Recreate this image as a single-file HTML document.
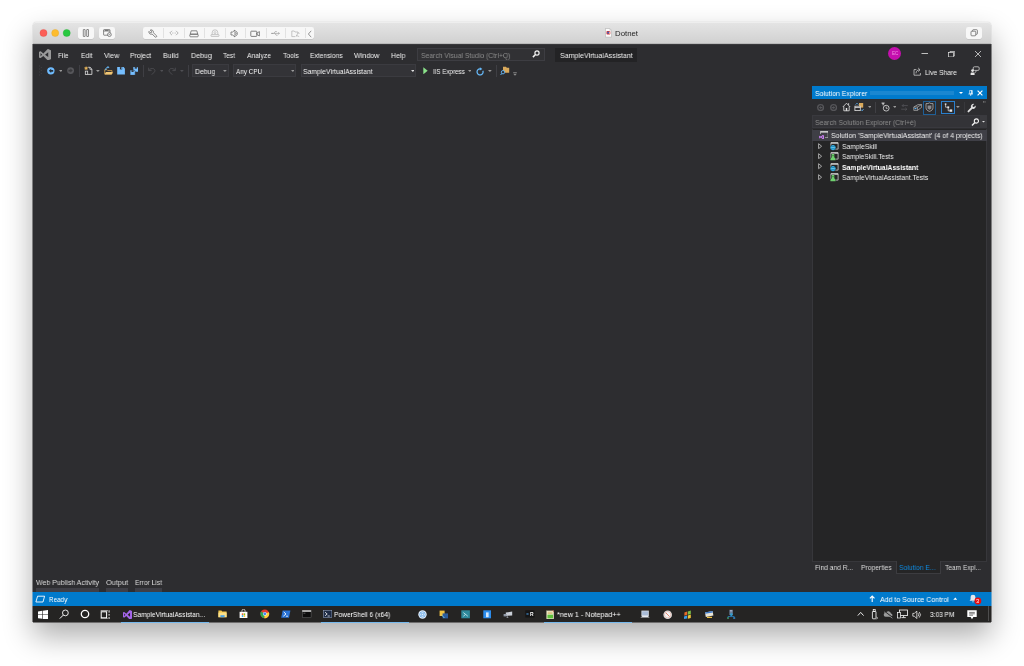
<!DOCTYPE html>
<html><head><meta charset="utf-8"><title>Dotnet</title>
<style>
html,body{margin:0;padding:0;background:#fff;}
body{width:1024px;height:666px;position:relative;overflow:hidden;font-family:"Liberation Sans", sans-serif;}
div,svg,span.t{position:absolute;box-sizing:border-box;}
span.t{white-space:pre;line-height:12px;height:12px;transform-origin:0 0;will-change:transform;}
</style></head><body>
<div style="left:33px;top:22px;width:958px;height:600px;border-radius:3.5px 3.5px 0 0;box-shadow:0 14px 30px rgba(0,0,0,0.33),0 0 1px rgba(0,0,0,0.3);background:linear-gradient(#e2e2e2 0,#e2e2e2 20px,#2d2d30 20px);"></div>
<div style="left:32px;top:25px;width:1px;height:19px;background:rgba(222,222,222,0.5);"></div>
<div style="left:32px;top:44px;width:1px;height:548px;background:rgba(45,45,48,0.5);"></div>
<div style="left:32px;top:592px;width:1px;height:14px;background:rgba(0,122,204,0.5);"></div>
<div style="left:32px;top:606px;width:1px;height:16px;background:rgba(37,36,35,0.5);"></div>
<div style="left:991px;top:25px;width:1px;height:19px;background:rgba(222,222,222,0.5);"></div>
<div style="left:991px;top:44px;width:1px;height:548px;background:rgba(45,45,48,0.5);"></div>
<div style="left:991px;top:592px;width:1px;height:14px;background:rgba(0,122,204,0.5);"></div>
<div style="left:991px;top:606px;width:1px;height:16px;background:rgba(37,36,35,0.5);"></div>
<div style="left:33px;top:22px;width:958px;height:22px;border-radius:3.5px 3.5px 0 0;background:linear-gradient(#e4e4e4,#d1d1d1);border-top:1px solid #eeeeee;border-bottom:1px solid #b9b9b9;"></div>
<svg style="left:36px;top:26px;" width="40" height="14" viewBox="0 0 40 14" preserveAspectRatio="none"><circle cx="7.5" cy="7" r="3.550" fill="#fc5f57" stroke="#e0443e" stroke-width="0.350"/><circle cx="19.200000000000003" cy="7" r="3.550" fill="#fdbc2e" stroke="#dea123" stroke-width="0.350"/><circle cx="30.700000000000003" cy="7" r="3.550" fill="#28c840" stroke="#1aab29" stroke-width="0.350"/></svg>
<div style="left:77.75px;top:27px;width:16.25px;height:11.7px;background:#f7f7f7;border-radius:2px;box-shadow:0 0.4px 0.5px rgba(0,0,0,0.14);"></div>
<div style="left:98.75px;top:27px;width:16.25px;height:11.7px;background:#f7f7f7;border-radius:2px;box-shadow:0 0.4px 0.5px rgba(0,0,0,0.14);"></div>
<div style="left:142.7px;top:27px;width:171.3px;height:11.7px;background:#f7f7f7;border-radius:2px;box-shadow:0 0.4px 0.5px rgba(0,0,0,0.14);"></div>
<div style="left:163.2px;top:27.5px;width:0.6px;height:10.7px;background:#e2e2e2;"></div>
<div style="left:183.7px;top:27.5px;width:0.6px;height:10.7px;background:#e2e2e2;"></div>
<div style="left:204.4px;top:27.5px;width:0.6px;height:10.7px;background:#e2e2e2;"></div>
<div style="left:224.7px;top:27.5px;width:0.6px;height:10.7px;background:#e2e2e2;"></div>
<div style="left:245.4px;top:27.5px;width:0.6px;height:10.7px;background:#e2e2e2;"></div>
<div style="left:265.5px;top:27.5px;width:0.6px;height:10.7px;background:#e2e2e2;"></div>
<div style="left:285.4px;top:27.5px;width:0.6px;height:10.7px;background:#e2e2e2;"></div>
<div style="left:305.3px;top:27.5px;width:0.6px;height:10.7px;background:#e2e2e2;"></div>
<div style="left:966px;top:27px;width:16px;height:11.7px;background:#f7f7f7;border-radius:2px;box-shadow:0 0.4px 0.5px rgba(0,0,0,0.14);"></div>
<svg style="left:82px;top:28.8px;" width="8" height="8" viewBox="0 0 8 8" preserveAspectRatio="none"><rect x="1.300" y="0.500" width="1.800" height="7" rx="0.300" fill="none" stroke="#5a5a5a" stroke-width="0.700"/><rect x="4.700" y="0.500" width="1.800" height="7" rx="0.300" fill="none" stroke="#5a5a5a" stroke-width="0.700"/></svg>
<svg style="left:102.7px;top:28.7px;" width="9.2" height="9" viewBox="0 0 9.2 9" preserveAspectRatio="none"><rect x="0.6" y="0.6" width="6.4" height="5.6" rx="0.5" fill="none" stroke="#5a5a5a" stroke-width="0.7"/><line x1="0.6" y1="2" x2="7" y2="2" stroke="#5a5a5a" stroke-width="0.7"/><rect x="2" y="0.9" width="3.4" height="0.8" fill="#5a5a5a"/><circle cx="6.4" cy="5.6" r="1.9" fill="#f7f7f7" stroke="#5a5a5a" stroke-width="0.7"/><path d="M5.6 5.6h1.6" stroke="#5a5a5a" stroke-width="0.6"/></svg>
<svg style="left:148px;top:28.5px;" width="10" height="9" viewBox="0 0 10 9" preserveAspectRatio="none"><path d="M2.2 1.2a2.2 2.2 0 0 1 3.2 2.5l3 3a0.9 0.9 0 0 1-1.3 1.3l-3-3A2.2 2.2 0 0 1 1 2.4l1.3 1.3 1.2-0.3 0.3-1.2z" fill="none" stroke="#5a5a5a" stroke-width="0.7" stroke-linejoin="round"/></svg>
<svg style="left:168.5px;top:30px;" width="10" height="6" viewBox="0 0 10 6" preserveAspectRatio="none"><path d="M3 0.8L0.8 3L3 5.2M7 0.8L9.2 3L7 5.2" fill="none" stroke="#9a9a9a" stroke-width="0.7"/><circle cx="3.6" cy="3" r="0.45" fill="#9a9a9a"/><circle cx="5" cy="3" r="0.45" fill="#9a9a9a"/><circle cx="6.4" cy="3" r="0.45" fill="#9a9a9a"/></svg>
<svg style="left:189px;top:29.5px;" width="10" height="8" viewBox="0 0 10 8" preserveAspectRatio="none"><path d="M2.2 0.8h5.6l1 3.4H1.2z" fill="none" stroke="#5a5a5a" stroke-width="0.7" stroke-linejoin="round"/><rect x="0.8" y="4.2" width="8.4" height="2.6" rx="0.8" fill="none" stroke="#5a5a5a" stroke-width="0.7"/></svg>
<svg style="left:209.5px;top:29px;" width="10" height="9" viewBox="0 0 10 9" preserveAspectRatio="none"><path d="M2.2 5.4V3.6a2.8 2.8 0 0 1 5.6 0v1.8" fill="none" stroke="#b0b0b0" stroke-width="0.7"/><circle cx="5" cy="3.6" r="1" fill="none" stroke="#b0b0b0" stroke-width="0.6"/><rect x="1" y="5.6" width="8" height="1.8" rx="0.4" fill="none" stroke="#b0b0b0" stroke-width="0.7"/></svg>
<svg style="left:230px;top:29px;" width="10" height="9" viewBox="0 0 10 9" preserveAspectRatio="none"><path d="M1 3h1.6L5 1v7L2.6 6H1z" fill="none" stroke="#5a5a5a" stroke-width="0.7" stroke-linejoin="round"/><path d="M6.3 2.2a3 3 0 0 1 0 4.6" fill="none" stroke="#5a5a5a" stroke-width="0.7"/><path d="M5.8 3.4a1.5 1.5 0 0 1 0 2.2" fill="none" stroke="#5a5a5a" stroke-width="0.6"/></svg>
<svg style="left:250.3px;top:29.5px;" width="11" height="8" viewBox="0 0 11 8" preserveAspectRatio="none"><rect x="0.8" y="1.2" width="6" height="5.2" rx="0.6" fill="none" stroke="#5a5a5a" stroke-width="0.75"/><path d="M6.8 3.2l2.6-1.6v4.4L6.8 4.4z" fill="none" stroke="#5a5a5a" stroke-width="0.7" stroke-linejoin="round"/></svg>
<svg style="left:270.5px;top:30px;" width="10" height="7" viewBox="0 0 10 7" preserveAspectRatio="none"><path d="M0.8 3.4h7.6M8.4 3.4l-1.2-1M8.4 3.4l-1.2 1M2.6 3.4l1.6-1.8h1.6M3.8 3.4l1.4 1.8h1.4" fill="none" stroke="#8f8f8f" stroke-width="0.6"/><circle cx="1" cy="3.4" r="0.7" fill="#8f8f8f"/></svg>
<svg style="left:290.5px;top:29.5px;" width="10" height="8" viewBox="0 0 10 8" preserveAspectRatio="none"><path d="M0.8 6.6V1h2.4l0.8 1h3v1.4" fill="none" stroke="#b0b0b0" stroke-width="0.7"/><path d="M0.8 6.6h3.4M5 6.8l2-4 1.6 0.6M5.2 5.4l3 1.2" fill="none" stroke="#b0b0b0" stroke-width="0.7"/></svg>
<svg style="left:306.5px;top:29.5px;" width="6" height="8" viewBox="0 0 6 8" preserveAspectRatio="none"><path d="M4.2 0.8L1.4 4l2.8 3.2" fill="none" stroke="#7a7a7a" stroke-width="0.8"/></svg>
<svg style="left:969.5px;top:29px;" width="9" height="8" viewBox="0 0 9 8" preserveAspectRatio="none"><rect x="2.6" y="0.7" width="4.8" height="4.6" rx="0.8" fill="none" stroke="#5a5a5a" stroke-width="0.7"/><rect x="1" y="2.2" width="4.8" height="4.6" rx="0.8" fill="#f7f7f7" stroke="#5a5a5a" stroke-width="0.7"/></svg>
<svg style="left:605px;top:28.1px;" width="7" height="9.6" viewBox="0 0 7 9.6" preserveAspectRatio="none"><path d="M0.400 0.400h4.200l2 2v6.800h-6.200z" fill="#fbfbfb" stroke="#a6a6a6" stroke-width="0.550"/><path d="M4.600 0.400v2h2z" fill="#c9c9c9"/><rect x="1.500" y="3" width="3.800" height="3.400" rx="0.700" fill="#d8342f"/><rect x="2.300" y="3.700" width="1.600" height="1.900" fill="#3467cf"/><rect x="4.200" y="3.500" width="0.600" height="2.400" fill="#f4f4f4"/></svg>
<div style="left:33px;top:44px;width:958px;height:1px;background:#39393c;"></div>
<svg style="left:39px;top:48.8px;" width="12.3" height="11.4" viewBox="0 0 24 24" preserveAspectRatio="none"><path d="M17.6 0.1L23.1 2.6Q24 3 24 3.9V20.1Q24 21 23.1 21.4L17.6 23.9Q16.9 24 16.5 23.5L8.5 14.7 3.9 18.5Q3 19.2 2.4 19L0.6 18.2Q0 18 0 17.3V6.700Q0 6 0.6 5.800L2.400 5Q3 4.800 3.900 5.500L8.500 9.300 16.500 0.500Q16.900 0 17.600 0.100ZM18 6.900V17.100L11.800 12ZM3 8.600L6.100 12 3 15.400Z" fill="#9a9a9a" fill-rule="evenodd"/></svg>
<div style="left:417.2px;top:48.2px;width:127.8px;height:12.4px;background:#313134;border:1px solid #3d3d42;"></div>
<svg style="left:532.4px;top:50.2px;" width="8" height="8" viewBox="0 0 8 8" preserveAspectRatio="none"><circle cx="5" cy="3" r="2.100" fill="none" stroke="#f1f1f1" stroke-width="1.200"/><path d="M3.500 4.500L0.900 7.100" stroke="#f1f1f1" stroke-width="1.500"/></svg>
<div style="left:555.3px;top:47.6px;width:81.8px;height:14.2px;background:#232325;"></div>
<div style="left:888px;top:47px;width:13px;height:13px;border-radius:50%;background:#c40fae;"></div>
<svg style="left:920px;top:52px;" width="10" height="3" viewBox="0 0 10 3" preserveAspectRatio="none"><path d="M1.5 1.5h6.5" stroke="#e4e4e4" stroke-width="0.8"/></svg>
<svg style="left:947.8px;top:50.6px;" width="7.2" height="6.6" viewBox="0 0 7.2 6.6" preserveAspectRatio="none"><path d="M2 1.500V0.500h4.700v4.300H5.500" fill="none" stroke="#e4e4e4" stroke-width="0.700"/><rect x="0.500" y="1.600" width="4.900" height="4.400" fill="none" stroke="#e4e4e4" stroke-width="0.700"/></svg>
<svg style="left:974px;top:50px;" width="8" height="8" viewBox="0 0 8 8" preserveAspectRatio="none"><path d="M1 1l6 6M7 1L1 7" stroke="#e4e4e4" stroke-width="0.75"/></svg>
<svg style="left:39.2px;top:65.4px;" width="3.6" height="11" viewBox="0 0 3.6 11" preserveAspectRatio="none"><g fill="#3e3e42"><rect x="0" y="0.5" width="1" height="1"/><rect x="1.800" y="2" width="1" height="1"/><rect x="0" y="3.500" width="1" height="1"/><rect x="1.800" y="5" width="1" height="1"/><rect x="0" y="6.500" width="1" height="1"/><rect x="1.800" y="8" width="1" height="1"/><rect x="0" y="9.500" width="1" height="1"/></g></svg>
<svg style="left:46.9px;top:66.85000000000001px;" width="7.7" height="7.7" viewBox="0 0 7.7 7.7" preserveAspectRatio="none"><circle cx="3.850" cy="3.850" r="3.700" fill="#6fbcff"/><path d="M4.200 1.700L1.800 3.850l2.400 2.150V4.700h2V3h-2z" fill="#26303a"/></svg>
<svg style="left:58.7px;top:69.95px;" width="3.8" height="2.3" viewBox="0 0 3.8 2.3" preserveAspectRatio="none"><path d="M0 0h3.8L1.9 1.9z" fill="#9a9a9a"/></svg>
<svg style="left:67px;top:67.10000000000001px;" width="7.2" height="7.2" viewBox="0 0 7.2 7.2" preserveAspectRatio="none"><circle cx="3.600" cy="3.600" r="3.450" fill="#56565a"/><path d="M3.400 1.600L5.700 3.600 3.400 5.600V4.400H1.500V2.800h1.900z" fill="#38383b"/></svg>
<div style="left:79px;top:65.2px;width:0.7px;height:11.4px;background:#3f3f44;"></div>
<svg style="left:84.2px;top:66.2px;" width="8.4" height="9" viewBox="0 0 8.4 9" preserveAspectRatio="none"><path d="M3.700 1.300h2.400l1.800 1.800v5.300H3.700" fill="none" stroke="#e6e6e6" stroke-width="0.800"/><path d="M5.900 1.300v2h2" fill="none" stroke="#e6e6e6" stroke-width="0.700"/><rect x="1.300" y="5.100" width="2.400" height="3.300" fill="#2d2d30" stroke="#e6e6e6" stroke-width="0.750"/><path d="M2.10 -0.10L2.83 1.29L4.38 1.56L3.29 2.69L3.51 4.24L2.10 3.55L0.69 4.24L0.91 2.69L-0.18 1.56L1.37 1.29z" fill="#ecb95c" stroke="#2d2d30" stroke-width="0.300"/></svg>
<svg style="left:96.39999999999999px;top:69.85px;" width="3.8" height="2.3" viewBox="0 0 3.8 2.3" preserveAspectRatio="none"><path d="M0 0h3.8L1.9 1.9z" fill="#9a9a9a"/></svg>
<svg style="left:103.8px;top:66.4px;" width="9" height="8.8" viewBox="0 0 9 8.8" preserveAspectRatio="none"><path d="M0.700 8V3.700h2.300l0.800 0.900h4.200v3.400z" fill="#2d2d30" stroke="#d9a652" stroke-width="0.800"/><path d="M0.600 8.400l1.300-2.300h6.900l-1.300 2.300z" fill="#f0c674"/><path d="M1.600 4.200C1.600 2.200 2.600 1.200 4 1.200" fill="none" stroke="#66b8f7" stroke-width="1"/><path d="M3.600 0v2.600l1.900-1.300z" fill="#66b8f7"/></svg>
<svg style="left:117.1px;top:67.1px;" width="8" height="7.5" viewBox="0 0 8 7.5" preserveAspectRatio="none"><path d="M0.200 0.100h6.400l1.300 1.300v6H0.200z" fill="#75beff"/><rect x="2.900" y="0.100" width="2.300" height="2.300" fill="#2d2d30"/><rect x="4.300" y="0.300" width="0.700" height="1.600" fill="#75beff"/></svg>
<svg style="left:129.7px;top:66.5px;" width="8.6" height="8.4" viewBox="0 0 8.6 8.4" preserveAspectRatio="none"><path d="M3.300 0.100h4.200l1 1v3.600H3.300z" fill="#75beff"/><rect x="4.700" y="0.100" width="2.200" height="1.500" fill="#2d2d30"/><path d="M0.100 3.100h4.100l1 1v4.200H0.100z" fill="#75beff" stroke="#2d2d30" stroke-width="0.500"/><rect x="1.500" y="3.300" width="2.100" height="1.600" fill="#2d2d30"/></svg>
<div style="left:142.8px;top:65.2px;width:0.7px;height:11.4px;background:#3f3f44;"></div>
<svg style="left:147.6px;top:66.8px;" width="8" height="7.8" viewBox="0 0 8 7.8" preserveAspectRatio="none"><path d="M0.700 0.700v2.900h2.900" fill="none" stroke="#4f4f54" stroke-width="0.900"/><path d="M0.900 3.400C2.400 1.200 5.400 0.800 6.600 2.600 7.600 4.200 6 6 3.600 7.400" fill="none" stroke="#4f4f54" stroke-width="0.900"/></svg>
<svg style="left:159.6px;top:69.95px;" width="3.8" height="2.3" viewBox="0 0 3.8 2.3" preserveAspectRatio="none"><path d="M0 0h3.8L1.9 1.9z" fill="#4f4f54"/></svg>
<svg style="left:168.2px;top:66.8px;" width="8" height="7.8" viewBox="0 0 8 7.8" preserveAspectRatio="none"><path d="M7.300 0.700v2.900H4.400" fill="none" stroke="#4f4f54" stroke-width="0.900"/><path d="M7.100 3.400C5.600 1.200 2.600 0.800 1.400 2.600 0.400 4.200 2 6 4.400 7.400" fill="none" stroke="#4f4f54" stroke-width="0.900"/></svg>
<svg style="left:180.1px;top:69.95px;" width="3.8" height="2.3" viewBox="0 0 3.8 2.3" preserveAspectRatio="none"><path d="M0 0h3.8L1.9 1.9z" fill="#4f4f54"/></svg>
<div style="left:188.2px;top:65.2px;width:0.7px;height:11.4px;background:#3f3f44;"></div>
<div style="left:192.2px;top:64.4px;width:37.2px;height:12.8px;background:#333337;border:1px solid #3b3b40;"></div>
<svg style="left:222.9px;top:70.05px;" width="3.8" height="2.3" viewBox="0 0 3.8 2.3" preserveAspectRatio="none"><path d="M0 0h3.8L1.9 1.9z" fill="#9a9a9a"/></svg>
<div style="left:233.3px;top:64.4px;width:63px;height:12.8px;background:#333337;border:1px solid #3b3b40;"></div>
<svg style="left:290.5px;top:70.05px;" width="3.8" height="2.3" viewBox="0 0 3.8 2.3" preserveAspectRatio="none"><path d="M0 0h3.8L1.9 1.9z" fill="#9a9a9a"/></svg>
<div style="left:300.5px;top:64.4px;width:115.8px;height:12.8px;background:#333337;border:1px solid #3b3b40;"></div>
<svg style="left:410.5px;top:70.05px;" width="3.8" height="2.3" viewBox="0 0 3.8 2.3" preserveAspectRatio="none"><path d="M0 0h3.8L1.9 1.9z" fill="#e0e0e0"/></svg>
<svg style="left:422.8px;top:66.9px;" width="5" height="7.6" viewBox="0 0 5 7.6" preserveAspectRatio="none"><path d="M0.300 0.300L4.700 3.800 0.300 7.300z" fill="#8ae28a"/></svg>
<svg style="left:467.70000000000005px;top:70.05px;" width="3.8" height="2.3" viewBox="0 0 3.8 2.3" preserveAspectRatio="none"><path d="M0 0h3.8L1.9 1.9z" fill="#9a9a9a"/></svg>
<svg style="left:476.2px;top:66.6px;" width="8" height="9" viewBox="0 0 8 9" preserveAspectRatio="none"><path d="M6.820 3.700A3 3 0 1 1 4 1.900" fill="none" stroke="#66b8f7" stroke-width="1.250"/><path d="M3.800 0.200v3.400L6.400 1.900z" fill="#66b8f7"/></svg>
<svg style="left:487.90000000000003px;top:70.05px;" width="3.8" height="2.3" viewBox="0 0 3.8 2.3" preserveAspectRatio="none"><path d="M0 0h3.8L1.9 1.9z" fill="#9a9a9a"/></svg>
<div style="left:496.4px;top:65.2px;width:0.7px;height:11.4px;background:#3f3f44;"></div>
<svg style="left:500px;top:66.0px;" width="10" height="10" viewBox="0 0 10 10" preserveAspectRatio="none"><path d="M3 0.800h3l0.800 0.900h2.400v5H3z" fill="#d9a95b"/><circle cx="3" cy="6.200" r="1.700" fill="#2d2d30" stroke="#66b8f7" stroke-width="0.900"/><path d="M1.800 7.400L0.600 9" stroke="#66b8f7" stroke-width="1"/></svg>
<svg style="left:513px;top:72px;" width="4" height="4.2" viewBox="0 0 4 4.2" preserveAspectRatio="none"><path d="M0.200 0.600h3.600" stroke="#8c8c8c" stroke-width="0.800"/><path d="M0.200 1.800h3.600L2 3.800z" fill="#8c8c8c"/></svg>
<svg style="left:913px;top:67.2px;" width="9" height="9" viewBox="0 0 9 9" preserveAspectRatio="none"><path d="M3.4 2.6H1v5.6h6.4V6" fill="none" stroke="#cfcfcf" stroke-width="0.75"/><path d="M3 6.4C3 4 4.6 2.8 6.6 2.8M5.2 1l1.8 1.8L5.2 4.6" fill="none" stroke="#cfcfcf" stroke-width="0.75"/></svg>
<svg style="left:969.6px;top:66.4px;" width="10" height="10" viewBox="0 0 10 10" preserveAspectRatio="none"><rect x="3.2" y="0.8" width="6" height="3.6" rx="1.2" fill="none" stroke="#cfcfcf" stroke-width="0.8"/><circle cx="2.6" cy="4.6" r="1.4" fill="#e6e6e6"/><path d="M0.6 9V7.4a1 1 0 0 1 1-1h2a1 1 0 0 1 1 1V9z" fill="#e6e6e6"/><path d="M6 4.4v1.6l-1.4 0.6" fill="none" stroke="#cfcfcf" stroke-width="0.7"/></svg>
<div style="left:812px;top:86.4px;width:175.39999999999998px;height:12.8px;background:#007acc;"></div>
<div style="left:870px;top:90.6px;width:84px;height:4.2px;background:rgba(255,255,255,0.10);"></div>
<svg style="left:958.6px;top:91.8px;" width="4" height="2.4" viewBox="0 0 4 2.4" preserveAspectRatio="none"><path d="M0 0h4L2 2z" fill="#ffffff"/></svg>
<svg style="left:967.8px;top:89.6px;" width="5.6" height="6.8" viewBox="0 0 5.6 6.8" preserveAspectRatio="none"><path d="M1.700 0.400h2.500v3.500H1.700zM0.400 4h4.800M2.700 4v2.700" fill="none" stroke="#fff" stroke-width="0.650"/><rect x="3.300" y="0.400" width="0.900" height="3.500" fill="#fff"/></svg>
<svg style="left:977.4px;top:89.7px;" width="6" height="6" viewBox="0 0 6 6" preserveAspectRatio="none"><path d="M0.600 0.600l4.800 4.800M5.400 0.600L0.600 5.400" stroke="#fff" stroke-width="1.150"/></svg>
<svg style="left:817px;top:103.8px;" width="7.2" height="7.2" viewBox="0 0 7.2 7.2" preserveAspectRatio="none"><circle cx="3.600" cy="3.600" r="2.900" fill="none" stroke="#56565a" stroke-width="1.350"/><path d="M3.900 1.900L2 3.600l1.900 1.700V4.200h1.600V3H3.900z" fill="#56565a"/></svg>
<svg style="left:829.8px;top:103.8px;" width="7.2" height="7.2" viewBox="0 0 7.2 7.2" preserveAspectRatio="none"><circle cx="3.600" cy="3.600" r="2.900" fill="none" stroke="#56565a" stroke-width="1.350"/><path d="M3.300 1.900L5.200 3.600 3.300 5.300V4.200H1.700V3h1.600z" fill="#56565a"/></svg>
<svg style="left:841.6px;top:102.4px;" width="9" height="9.6" viewBox="0 0 9 9.6" preserveAspectRatio="none"><path d="M0.8 5L4.5 1.2 8.2 5M6.6 3V1.2" fill="none" stroke="#e6e6e6" stroke-width="0.8"/><path d="M1.8 4.4v4.4h5.4V4.4" fill="none" stroke="#e6e6e6" stroke-width="0.8"/><rect x="3.8" y="6" width="1.4" height="2.8" fill="#e6e6e6"/></svg>
<svg style="left:854.4px;top:102.4px;" width="10.4" height="10" viewBox="0 0 10.4 10" preserveAspectRatio="none"><rect x="5" y="1" width="4.2" height="4.6" fill="#d9a95b"/><rect x="0.9" y="4.2" width="5.4" height="4.4" fill="#2d2d30" stroke="#e0e0e0" stroke-width="0.8"/><path d="M0.9 5.4h5.4" stroke="#e0e0e0" stroke-width="0.9"/><path d="M1.6 2.6l1.4-1.4 1.4 1.4" fill="none" stroke="#5db3f5" stroke-width="0.8"/><path d="M7 7.6l1.2 1.2 1.4-1.8" fill="none" stroke="#5db3f5" stroke-width="0.8"/></svg>
<svg style="left:867.7px;top:106.05px;" width="3.8" height="2.3" viewBox="0 0 3.8 2.3" preserveAspectRatio="none"><path d="M0 0h3.8L1.9 1.9z" fill="#9a9a9a"/></svg>
<div style="left:875px;top:101.6px;width:0.7px;height:11.4px;background:#3f3f44;"></div>
<svg style="left:880.6px;top:101.8px;" width="10" height="10.4" viewBox="0 0 10 10.4" preserveAspectRatio="none"><circle cx="5.2" cy="6.2" r="2.9" fill="none" stroke="#e0e0e0" stroke-width="0.8"/><path d="M5.2 4.6v1.8h1.4" fill="none" stroke="#e0e0e0" stroke-width="0.7"/><path d="M0.600 1.100h3M2.100 1.100v2.200" stroke="#f0f0f0" stroke-width="0.900"/></svg>
<svg style="left:892.5px;top:106.05px;" width="3.8" height="2.3" viewBox="0 0 3.8 2.3" preserveAspectRatio="none"><path d="M0 0h3.8L1.9 1.9z" fill="#9a9a9a"/></svg>
<svg style="left:900px;top:103px;" width="9" height="9" viewBox="0 0 9 9" preserveAspectRatio="none"><path d="M2.2 2.6h5.6M2.2 2.6l1.4-1.4M2.2 2.6l1.4 1.4M6.8 6.2H1.2M6.8 6.2L5.4 4.8M6.8 6.2L5.4 7.6" fill="none" stroke="#55555a" stroke-width="0.8"/></svg>
<svg style="left:912.6px;top:103px;" width="9.6" height="9" viewBox="0 0 9.6 9" preserveAspectRatio="none"><path d="M0.8 4L5 1.6h3.600v2.800L4.400 7.400H0.800z" fill="none" stroke="#b4b4b4" stroke-width="0.700"/><path d="M0.800 4h3.600v3.400M4.400 4L8.600 1.600" fill="none" stroke="#b4b4b4" stroke-width="0.700"/><rect x="1.6" y="5" width="1.8" height="1.2" fill="#5db3f5"/></svg>
<div style="left:923.2px;top:100.5px;width:13px;height:14px;border:1px solid #1f5f96;background:#2a2a2d;"></div>
<svg style="left:925.4px;top:102.4px;" width="9" height="10" viewBox="0 0 9 10" preserveAspectRatio="none"><path d="M1 1.6h2l1.4-0.8L6 1.6h2v4.2C8 7.6 6.4 8.8 4.5 9.4 2.6 8.8 1 7.6 1 5.800z" fill="none" stroke="#b4b4b4" stroke-width="0.800"/><path d="M2.600 3.400h3.800v3L4.500 7.800 2.600 6.400z" fill="#8a8a8e"/></svg>
<div style="left:941px;top:101px;width:13.5px;height:13px;border:1px solid #2a7fcc;background:#2a2a2d;"></div>
<svg style="left:943.6px;top:102.6px;" width="9" height="9.6" viewBox="0 0 9 9.6" preserveAspectRatio="none"><path d="M1.6 1v3.2h2.6v3.6h1.6" fill="none" stroke="#e6e6e6" stroke-width="0.7"/><rect x="0.8" y="0.4" width="1.6" height="1.4" fill="#e6e6e6"/><rect x="3.4" y="3.4" width="1.8" height="1.8" fill="#e6e6e6"/><rect x="5.6" y="6.4" width="2.6" height="2.4" fill="#e6e6e6"/></svg>
<svg style="left:955.8000000000001px;top:106.14999999999999px;" width="3.8" height="2.3" viewBox="0 0 3.8 2.3" preserveAspectRatio="none"><path d="M0 0h3.8L1.9 1.9z" fill="#9a9a9a"/></svg>
<div style="left:963.8px;top:101.6px;width:0.7px;height:11.4px;background:#38383c;"></div>
<svg style="left:967.4px;top:102.6px;" width="10" height="10" viewBox="0 0 10 10" preserveAspectRatio="none"><path d="M8.6 2.4L7 4 5.800 3.800 5.600 2.600 7.200 1A2.600 2.600 0 0 0 4 4.400L0.800 7.800a0.900 0.900 0 0 0 1.300 1.300L5.400 5.800A2.600 2.600 0 0 0 8.600 2.400z" fill="#e0e0e0"/></svg>
<svg style="left:982.6px;top:101.4px;" width="3" height="3" viewBox="0 0 3 3" preserveAspectRatio="none"><rect x="0" y="0.2" width="0.8" height="1.4" fill="#8c8c8c"/><rect x="1.6" y="0.2" width="0.8" height="1.4" fill="#8c8c8c"/></svg>
<div style="left:812px;top:115.2px;width:175.39999999999998px;height:13px;background:#333337;border:1px solid #39393e;"></div>
<div style="left:980.4px;top:116.2px;width:6.4px;height:11.2px;background:#3a3a3e;"></div>
<svg style="left:970.6px;top:117.6px;" width="8.4" height="8.4" viewBox="0 0 8.4 8.4" preserveAspectRatio="none"><circle cx="5.400" cy="3" r="2.100" fill="none" stroke="#f1f1f1" stroke-width="1.100"/><path d="M3.900 4.500L1 7.400" stroke="#f1f1f1" stroke-width="1.400"/></svg>
<svg style="left:982.2px;top:121.05px;" width="3.0" height="1.9" viewBox="0 0 3.0 1.9" preserveAspectRatio="none"><path d="M0 0h3.0L1.5 1.5z" fill="#e0e0e0"/></svg>
<div style="left:812px;top:128.6px;width:175.39999999999998px;height:433.2px;background:#252526;border:1px solid #37373b;border-top:none;"></div>
<div style="left:812px;top:130.1px;width:175.39999999999998px;height:10.6px;background:#3f3f46;"></div>
<svg style="left:819.8px;top:131.2px;" width="8.6" height="7.2" viewBox="0 0 8.6 7.2" preserveAspectRatio="none"><path d="M0.400 0.600h7.800v6.200H0.400z" fill="none" stroke="#d4d4d4" stroke-width="0.750"/><path d="M0.400 0.900h7.800" stroke="#d4d4d4" stroke-width="1.400"/></svg>
<div style="left:818.6px;top:134.4px;width:6.4px;height:5px;background:#3f3f46;"></div>
<svg style="left:819px;top:134.8px;" width="5.4" height="4.2" viewBox="0 0 24 24" preserveAspectRatio="none"><path d="M17.600 0.100L23.100 2.600Q24 3 24 3.900V20.100Q24 21 23.100 21.400L17.600 23.900Q16.900 24 16.500 23.500L8.500 14.700 3.900 18.500Q3 19.200 2.400 19L0.600 18.200Q0 18 0 17.300V6.700Q0 6 0.600 5.800L2.400 5Q3 4.800 3.900 5.500L8.500 9.300 16.500 0.500Q16.900 0 17.600 0.100ZM18 6.900V17.100L11.800 12ZM3 8.600L6.100 12 3 15.400Z" fill="#cc80f5" fill-rule="evenodd"/></svg>
<svg style="left:817.6px;top:142.5px;" width="4.6" height="6.4" viewBox="0 0 4.6 6.4" preserveAspectRatio="none"><path d="M0.600 0.700L3.600 3.200 0.600 5.700z" fill="none" stroke="#d0d0d0" stroke-width="0.750"/></svg>
<svg style="left:829.6px;top:141.9px;" width="9" height="9" viewBox="0 0 9 9" preserveAspectRatio="none"><path d="M0.900 0.800h7.200v6.300H0.900z" fill="none" stroke="#d4d4d4" stroke-width="0.750"/><path d="M0.900 1h7.200" stroke="#d4d4d4" stroke-width="1.300"/><circle cx="3" cy="5.600" r="2.900" fill="#252526"/><circle cx="3" cy="5.600" r="2.600" fill="#25a4dc"/><path d="M3 3.200v4.800M0.600 5.600h4.800" fill="none" stroke="#8fdcf8" stroke-width="0.450"/><path d="M1.300 4.100a3 3 0 0 0 3.400 0M1.300 7.100a3 3 0 0 1 3.400 0" fill="none" stroke="#12648c" stroke-width="0.500"/></svg>
<svg style="left:817.6px;top:152.7px;" width="4.6" height="6.4" viewBox="0 0 4.6 6.4" preserveAspectRatio="none"><path d="M0.600 0.700L3.600 3.200 0.600 5.700z" fill="none" stroke="#d0d0d0" stroke-width="0.750"/></svg>
<svg style="left:829.6px;top:152.1px;" width="9" height="9" viewBox="0 0 9 9" preserveAspectRatio="none"><path d="M0.900 0.800h7.200v6.300H0.900z" fill="none" stroke="#d4d4d4" stroke-width="0.750"/><path d="M0.900 1h7.200" stroke="#d4d4d4" stroke-width="1.300"/><path d="M1.300 1.700h3.400v3.300l1.300 1.600v2.100H0V6.600l1.300-1.600z" fill="#252526"/><path d="M1.700 2.100h2.600v3.100l1.300 1.600v1.500H0.400V6.800l1.300-1.600z" fill="#6fd06f"/><path d="M2.300 2.900l1.400 1.400M3.700 2.900L2.300 4.300" stroke="#256a25" stroke-width="0.550"/></svg>
<svg style="left:817.6px;top:163.29999999999998px;" width="4.6" height="6.4" viewBox="0 0 4.6 6.4" preserveAspectRatio="none"><path d="M0.600 0.700L3.600 3.200 0.600 5.700z" fill="none" stroke="#d0d0d0" stroke-width="0.750"/></svg>
<svg style="left:829.6px;top:162.7px;" width="9" height="9" viewBox="0 0 9 9" preserveAspectRatio="none"><path d="M0.900 0.800h7.200v6.300H0.900z" fill="none" stroke="#d4d4d4" stroke-width="0.750"/><path d="M0.900 1h7.200" stroke="#d4d4d4" stroke-width="1.300"/><circle cx="3" cy="5.600" r="2.900" fill="#252526"/><circle cx="3" cy="5.600" r="2.600" fill="#25a4dc"/><path d="M3 3.200v4.800M0.600 5.600h4.800" fill="none" stroke="#8fdcf8" stroke-width="0.450"/><path d="M1.300 4.100a3 3 0 0 0 3.400 0M1.300 7.100a3 3 0 0 1 3.400 0" fill="none" stroke="#12648c" stroke-width="0.500"/></svg>
<svg style="left:817.6px;top:173.5px;" width="4.6" height="6.4" viewBox="0 0 4.6 6.4" preserveAspectRatio="none"><path d="M0.600 0.700L3.600 3.200 0.600 5.700z" fill="none" stroke="#d0d0d0" stroke-width="0.750"/></svg>
<svg style="left:829.6px;top:172.9px;" width="9" height="9" viewBox="0 0 9 9" preserveAspectRatio="none"><path d="M0.900 0.800h7.200v6.300H0.900z" fill="none" stroke="#d4d4d4" stroke-width="0.750"/><path d="M0.900 1h7.200" stroke="#d4d4d4" stroke-width="1.300"/><path d="M1.300 1.700h3.400v3.300l1.300 1.600v2.100H0V6.600l1.300-1.600z" fill="#252526"/><path d="M1.700 2.100h2.600v3.100l1.300 1.600v1.500H0.400V6.800l1.300-1.600z" fill="#6fd06f"/><path d="M2.300 2.900l1.400 1.400M3.700 2.900L2.300 4.300" stroke="#256a25" stroke-width="0.550"/></svg>
<div style="left:895.7px;top:561.2px;width:45.3px;height:12.4px;background:#252526;border:1px solid #3c3c40;border-top:none;"></div>
<div style="left:36.2px;top:588.4px;width:63.0px;height:3.4px;background:#3f3f46;"></div>
<div style="left:106px;top:588.4px;width:22px;height:3.4px;background:#3f3f46;"></div>
<div style="left:135px;top:588.4px;width:27px;height:3.4px;background:#3f3f46;"></div>
<div style="left:33px;top:591.8px;width:958px;height:14px;background:#007acc;"></div>
<svg style="left:34.6px;top:594.9px;" width="10.4" height="8.4" viewBox="0 0 10.4 8.4" preserveAspectRatio="none"><path d="M2.600 1.200h7L8 7H0.900z" fill="none" stroke="#fff" stroke-width="0.900"/></svg>
<svg style="left:868.6px;top:595px;" width="6.4" height="7.6" viewBox="0 0 6.4 7.6" preserveAspectRatio="none"><path d="M3.200 7V1.400M0.900 3.400L3.200 1l2.300 2.400" fill="none" stroke="#fff" stroke-width="1.100"/></svg>
<svg style="left:952.6px;top:597px;" width="4.6" height="3" viewBox="0 0 4.6 3" preserveAspectRatio="none"><path d="M0.300 2.800L2.300 0.400 4.300 2.800z" fill="#fff"/></svg>
<svg style="left:968.6px;top:594px;" width="13" height="11" viewBox="0 0 13 11" preserveAspectRatio="none"><path d="M4 0.700a2.400 2.400 0 0 1 2.400 2.400v2.200l1 1.400H0.600l1-1.400V3.100A2.400 2.400 0 0 1 4 0.700zM3.100 7.400h1.800a0.900 0.900 0 0 1-1.800 0z" fill="#e4e8ec"/><circle cx="8.900" cy="7" r="3.400" fill="#ec0c0c"/></svg>
<div style="left:33px;top:605.7px;width:958px;height:16.3px;background:#252423;"></div>
<div style="left:33px;top:622px;width:958px;height:1px;background:rgba(37,36,35,0.5);"></div>
<svg style="left:38px;top:609.5px;" width="10" height="9.6" viewBox="0 0 10 9.6" preserveAspectRatio="none"><path d="M0 1.400L4.200 0.800v3.700H0zM4.800 0.700L10 0v4.500H4.800zM0 5.100h4.200v3.700L0 8.200zM4.800 5.100H10v4.500L4.800 8.900z" fill="#ffffff"/></svg>
<svg style="left:58.6px;top:609.4px;" width="10.4" height="10.4" viewBox="0 0 10.4 10.4" preserveAspectRatio="none"><circle cx="6.400" cy="3.900" r="2.900" fill="none" stroke="#fff" stroke-width="0.900"/><path d="M4.300 6.100L0.800 9.600" stroke="#fff" stroke-width="1"/></svg>
<svg style="left:79.6px;top:609.2px;" width="10" height="10" viewBox="0 0 10 10" preserveAspectRatio="none"><circle cx="5" cy="5" r="3.700" fill="none" stroke="#fff" stroke-width="1.300"/></svg>
<svg style="left:100px;top:609.6px;" width="11" height="9.6" viewBox="0 0 11 9.6" preserveAspectRatio="none"><rect x="1.200" y="1.800" width="5.400" height="6" fill="none" stroke="#fff" stroke-width="1"/><path d="M0.700 0.700h7.200M0.700 8.900h7.200" stroke="#fff" stroke-width="0.700"/><path d="M9.100 0.300v2.300M9.100 4v1.600M9.100 7v2.300" stroke="#fff" stroke-width="0.900"/></svg>
<svg style="left:122.8px;top:609.7px;" width="9.4" height="9.6" viewBox="0 0 24 24" preserveAspectRatio="none"><path d="M17.600 0.100L23.100 2.600Q24 3 24 3.900V20.100Q24 21 23.100 21.400L17.600 23.900Q16.900 24 16.500 23.500L8.500 14.700 3.900 18.500Q3 19.200 2.400 19L0.600 18.200Q0 18 0 17.300V6.700Q0 6 0.600 5.800L2.400 5Q3 4.800 3.900 5.500L8.500 9.300 16.500 0.500Q16.900 0 17.600 0.100ZM18 6.900V17.100L11.800 12ZM3 8.600L6.100 12 3 15.400Z" fill="#a566ea" fill-rule="evenodd"/></svg>
<div style="left:120.5px;top:621.6px;width:88.2px;height:1px;background:#76b9ed;"></div>
<svg style="left:217.6px;top:610.2px;" width="9" height="7.6" viewBox="0 0 9 7.6" preserveAspectRatio="none"><path d="M0.400 0.600h3l0.800 0.900h4.400v5.700H0.400z" fill="#f6c84c"/><rect x="0.400" y="2.600" width="8.200" height="4.600" fill="#fbe08a"/><rect x="2.400" y="5.200" width="4.200" height="2" fill="#4aa3e8"/></svg>
<svg style="left:238.6px;top:609.2px;" width="9" height="9.4" viewBox="0 0 9 9.4" preserveAspectRatio="none"><path d="M2.900 2.800V1.900a1.600 1.600 0 0 1 3.200 0v0.900" fill="none" stroke="#fff" stroke-width="0.700"/><rect x="0.600" y="2.800" width="7.800" height="6.200" fill="#fff"/><rect x="2.800" y="4.400" width="1.500" height="1.500" fill="#f25022"/><rect x="4.700" y="4.400" width="1.500" height="1.500" fill="#7fba00"/><rect x="2.800" y="6.300" width="1.500" height="1.500" fill="#00a4ef"/><rect x="4.700" y="6.300" width="1.500" height="1.500" fill="#ffb900"/></svg>
<svg style="left:260px;top:609.4px;" width="9.6" height="9.6" viewBox="0 0 9.6 9.6" preserveAspectRatio="none"><circle cx="4.800" cy="4.800" r="4.400" fill="#e33b2e"/><path d="M4.800 4.800L1 2.600A4.400 4.400 0 0 0 4.300 9.200z" fill="#2da94f"/><path d="M4.800 4.800L4.300 9.200A4.400 4.400 0 0 0 8.900 3.200z" fill="#fdd23b"/><circle cx="4.800" cy="4.800" r="1.900" fill="#fff"/><circle cx="4.800" cy="4.800" r="1.500" fill="#4285f4"/></svg>
<svg style="left:281.4px;top:610px;" width="9.6" height="8.2" viewBox="0 0 9.6 8.2" preserveAspectRatio="none"><path d="M1.600 0.400h7.800L8 7.800H0.200z" fill="#2a73d6"/><path d="M2.800 2l2.200 2-2.600 2.200" fill="none" stroke="#fff" stroke-width="0.900"/><path d="M5 6.200h2" stroke="#fff" stroke-width="0.800"/></svg>
<svg style="left:302.4px;top:609.6px;" width="9.4" height="8" viewBox="0 0 9.4 8" preserveAspectRatio="none"><rect x="0.300" y="0.300" width="8.800" height="7.400" fill="#0c0c0c" stroke="#6a6a6a" stroke-width="0.500"/><rect x="0.300" y="0.300" width="8.800" height="1.500" fill="#d0d0d0"/><path d="M1.400 3.200h2" stroke="#aaa" stroke-width="0.500"/></svg>
<svg style="left:322.6px;top:610.2px;" width="9.2" height="8" viewBox="0 0 9.2 8" preserveAspectRatio="none"><rect x="0.300" y="0.300" width="8.600" height="7.400" fill="#1d2a44" stroke="#9fb0cc" stroke-width="0.500"/><path d="M2 2.200l2.200 1.800L2 5.800" fill="none" stroke="#fff" stroke-width="0.800"/><path d="M4.600 6h2.200" stroke="#fff" stroke-width="0.700"/></svg>
<div style="left:321px;top:621.6px;width:87.8px;height:1px;background:#76b9ed;"></div>
<svg style="left:418px;top:609.8px;" width="9" height="9" viewBox="0 0 9 9" preserveAspectRatio="none"><circle cx="4.500" cy="4.500" r="4.200" fill="#e4eefa"/><circle cx="4.500" cy="4.500" r="2.700" fill="none" stroke="#5aa2e4" stroke-width="0.800"/><circle cx="4.500" cy="4.500" r="1" fill="none" stroke="#5aa2e4" stroke-width="0.600"/><path d="M2.600 2.600l1.200 1.200M6.400 2.600L5.200 3.800M2.600 6.400l1.200-1.200M6.400 6.400L5.200 5.200" stroke="#5aa2e4" stroke-width="0.600"/></svg>
<svg style="left:439px;top:609.8px;" width="9.6" height="9" viewBox="0 0 9.6 9" preserveAspectRatio="none"><rect x="0.600" y="0.600" width="5" height="5.400" fill="#f0c342"/><rect x="3.600" y="3.400" width="5.400" height="5" fill="#2b5c9c"/><path d="M3 5.400l2.400 2.600" stroke="#6fd0f0" stroke-width="0.900"/></svg>
<svg style="left:461px;top:610px;" width="9.2" height="8.6" viewBox="0 0 9.2 8.6" preserveAspectRatio="none"><rect x="0.300" y="0.300" width="8.600" height="8" fill="#2f8a9c"/><path d="M2.400 2.600l4.400 3.600M2.400 6.200l2-1.600" stroke="#d8f0f4" stroke-width="0.800"/></svg>
<svg style="left:482.6px;top:610px;" width="8.8" height="8.6" viewBox="0 0 8.8 8.6" preserveAspectRatio="none"><rect x="0.300" y="0.300" width="8.200" height="8" fill="#2b8cec"/><rect x="3.200" y="2.400" width="1.600" height="4.800" fill="#fff"/><path d="M5.600 2.400v4.800" stroke="#bfe0ff" stroke-width="0.800"/></svg>
<svg style="left:503.4px;top:610.6px;" width="10" height="7.6" viewBox="0 0 10 7.6" preserveAspectRatio="none"><path d="M2.800 1.600l6.400-1v3.800l-6.400 0.600z" fill="#c9ced6"/><rect x="0.600" y="3" width="3" height="2.400" fill="#8f98a6"/><path d="M4.400 5.200v2M3 7.200h3" stroke="#aab2be" stroke-width="0.700"/></svg>
<svg style="left:525.4px;top:610.2px;" width="9.8" height="7.8" viewBox="0 0 9.8 7.8" preserveAspectRatio="none"><rect x="0.300" y="0.300" width="9.200" height="7.200" fill="#151515"/><path d="M1.400 4h2.200" stroke="#4aa3f0" stroke-width="1"/></svg>
<svg style="left:546px;top:609.6px;" width="8.4" height="9.6" viewBox="0 0 8.4 9.6" preserveAspectRatio="none"><rect x="0.500" y="0.800" width="7.400" height="8.400" fill="#f4f0d8" stroke="#9a9a7a" stroke-width="0.500"/><rect x="1.400" y="4.600" width="5.600" height="3.800" fill="#5fbf3a"/><path d="M1.600 2.200h5M1.600 3.400h5" stroke="#c8a03a" stroke-width="0.600"/><path d="M6.400 0.400l1.400 1.400" stroke="#d04a3a" stroke-width="0.900"/></svg>
<div style="left:543.8px;top:621.6px;width:88.1px;height:1px;background:#76b9ed;"></div>
<svg style="left:640px;top:610px;" width="10" height="8.6" viewBox="0 0 10 8.6" preserveAspectRatio="none"><rect x="1.400" y="0.600" width="7.400" height="5.400" fill="#d6dce6"/><rect x="2.200" y="1.400" width="5.800" height="3.800" fill="#a9bcd8"/><path d="M0.400 7.600l2-1.600h5.600l1.600 1.600z" fill="#e6eaf0"/></svg>
<svg style="left:662.6px;top:609.8px;" width="9.4" height="9.4" viewBox="0 0 9.4 9.4" preserveAspectRatio="none"><circle cx="4.700" cy="4.700" r="4.300" fill="#e2e2e2"/><circle cx="4.700" cy="4.700" r="3.200" fill="#f4f4f4" stroke="#e0a090" stroke-width="0.500"/><path d="M2.800 2.800l3.800 3.800" stroke="#d8543a" stroke-width="0.700"/></svg>
<svg style="left:683.4px;top:609.8px;" width="9.8" height="9.4" viewBox="0 0 9.8 9.4" preserveAspectRatio="none"><path d="M1.400 2.400l2.800-1v3.400l-2.800 1z" fill="#e86a2a"/><path d="M4.800 1.600l3-1v3.400l-3 0.800z" fill="#7cc04a"/><path d="M1 6.400l3-0.800v3l-3 0.400z" fill="#3a9be8"/><path d="M4.800 5.400l3-0.800v3.400l-3 0.800z" fill="#f0c63a"/></svg>
<svg style="left:704.4px;top:610px;" width="10.2" height="8.8" viewBox="0 0 10.2 8.8" preserveAspectRatio="none"><path d="M1 2.400l7.600-1.400 0.800 4.600-7.600 1.400z" fill="#e8e4d8"/><path d="M1 2.400l7.600-1.400 0.200 1.400-7.600 1.400z" fill="#3a7ad0"/><path d="M3 7.400h5" stroke="#f0c040" stroke-width="1.200"/></svg>
<svg style="left:725.8px;top:609.2px;" width="10" height="10.4" viewBox="0 0 10 10.4" preserveAspectRatio="none"><rect x="3.400" y="0.800" width="3.400" height="5.200" fill="#6c7f9c"/><rect x="4" y="1.400" width="2.200" height="0.900" fill="#b8c6dc"/><path d="M5 6v1.600M2 9.400V7.600h6.200v1.800" fill="none" stroke="#2f86c8" stroke-width="0.800"/><rect x="1" y="8.400" width="2" height="1.400" fill="#3f8f5a"/><rect x="7.200" y="8.400" width="2" height="1.400" fill="#2f86c8"/><circle cx="5.400" cy="5.600" r="1.300" fill="#2fa0d0"/></svg>
<svg style="left:857.4px;top:610.8px;" width="7.4" height="5.6" viewBox="0 0 7.4 5.6" preserveAspectRatio="none"><path d="M0.800 4.600L3.700 1.400 6.600 4.600" fill="none" stroke="#fff" stroke-width="0.900"/></svg>
<svg style="left:871px;top:608.6px;" width="7.6" height="11" viewBox="0 0 7.6 11" preserveAspectRatio="none"><rect x="1.400" y="2.400" width="3.600" height="7.400" rx="0.600" fill="none" stroke="#fff" stroke-width="0.800"/><rect x="2.200" y="0.600" width="2" height="1.800" fill="none" stroke="#fff" stroke-width="0.700"/><path d="M5.400 8l1.400 1-1.400 1" fill="none" stroke="#fff" stroke-width="0.600"/></svg>
<svg style="left:883.4px;top:610px;" width="11" height="8.6" viewBox="0 0 11 8.6" preserveAspectRatio="none"><path d="M2.600 6.800a2 2 0 0 1 0.200-4 2.800 2.800 0 0 1 5.200 0.600 1.800 1.800 0 0 1 0.400 3.400z" fill="#9a9a9a"/><path d="M1.400 1.400l8.400 6.400" stroke="#252423" stroke-width="1.200"/><path d="M1 1.800l8.400 6.400" stroke="#c8c8c8" stroke-width="0.600"/></svg>
<svg style="left:897.4px;top:609.4px;" width="11.4" height="10" viewBox="0 0 11.4 10" preserveAspectRatio="none"><rect x="2.600" y="1" width="8" height="5.600" fill="none" stroke="#fff" stroke-width="0.800"/><path d="M6.600 6.600v1.800M4.400 8.600h4.400" stroke="#fff" stroke-width="0.800"/><rect x="0.500" y="3.400" width="3" height="5.600" fill="#252423" stroke="#fff" stroke-width="0.700"/></svg>
<svg style="left:911.8px;top:609.6px;" width="10" height="9.6" viewBox="0 0 10 9.6" preserveAspectRatio="none"><path d="M0.800 3.400h1.600L4.800 1v7.600L2.400 6.200H0.800z" fill="none" stroke="#fff" stroke-width="0.700" stroke-linejoin="round"/><path d="M6 3.200a2.200 2.200 0 0 1 0 3.200M7.200 2a4 4 0 0 1 0 5.600" fill="none" stroke="#fff" stroke-width="0.700"/></svg>
<svg style="left:967.4px;top:609.6px;" width="10" height="10" viewBox="0 0 10 10" preserveAspectRatio="none"><path d="M0.300 0.300h9.400v6.800H6.400L5 9.200 3.600 7.100H0.300z" fill="#fff"/><path d="M2.200 2.400h5.600M2.200 3.800h5.600M2.200 5.200h3.800" stroke="#252423" stroke-width="0.600"/></svg>
<div style="left:988.3px;top:606.4px;width:0.6px;height:15px;background:#4d4d4d;"></div>
<span class="t" style="left:614.75px;top:28px;font-size:7.7px;font-weight:400;color:#252525;transform:scaleX(1.0174);">Dotnet</span>
<span class="t" style="left:58.30px;top:50px;font-size:7.8px;font-weight:400;color:#f0f0f0;transform:scaleX(0.8268);">File</span>
<span class="t" style="left:80.80px;top:50px;font-size:7.8px;font-weight:400;color:#f0f0f0;transform:scaleX(0.8558);">Edit</span>
<span class="t" style="left:103.80px;top:50px;font-size:7.8px;font-weight:400;color:#f0f0f0;transform:scaleX(0.9066);">View</span>
<span class="t" style="left:130.20px;top:50px;font-size:7.8px;font-weight:400;color:#f0f0f0;transform:scaleX(0.8772);">Project</span>
<span class="t" style="left:162.80px;top:50px;font-size:7.8px;font-weight:400;color:#f0f0f0;transform:scaleX(0.8995);">Build</span>
<span class="t" style="left:190.50px;top:50px;font-size:7.8px;font-weight:400;color:#f0f0f0;transform:scaleX(0.9050);">Debug</span>
<span class="t" style="left:223.00px;top:50px;font-size:7.8px;font-weight:400;color:#f0f0f0;transform:scaleX(0.8245);">Test</span>
<span class="t" style="left:246.80px;top:50px;font-size:7.8px;font-weight:400;color:#f0f0f0;transform:scaleX(0.8649);">Analyze</span>
<span class="t" style="left:282.50px;top:50px;font-size:7.8px;font-weight:400;color:#f0f0f0;transform:scaleX(0.8680);">Tools</span>
<span class="t" style="left:309.80px;top:50px;font-size:7.8px;font-weight:400;color:#f0f0f0;transform:scaleX(0.8574);">Extensions</span>
<span class="t" style="left:353.80px;top:50px;font-size:7.8px;font-weight:400;color:#f0f0f0;transform:scaleX(0.9158);">Window</span>
<span class="t" style="left:390.90px;top:50px;font-size:7.8px;font-weight:400;color:#f0f0f0;transform:scaleX(0.8974);">Help</span>
<span class="t" style="left:421.00px;top:50px;font-size:7.8px;font-weight:400;color:#8c8c8c;transform:scaleX(0.8735);">Search Visual Studio (Ctrl+Q)</span>
<span class="t" style="left:559.80px;top:50px;font-size:7.8px;font-weight:400;color:#f1f1f1;transform:scaleX(0.9084);">SampleVirtualAssistant</span>
<span class="t" style="left:891.60px;top:48px;font-size:4.6px;font-weight:400;color:#ee8fe0;transform:scaleX(0.9389);">EC</span>
<span class="t" style="left:194.80px;top:66px;font-size:7.8px;font-weight:400;color:#f4f4f4;transform:scaleX(0.8789);">Debug</span>
<span class="t" style="left:235.70px;top:66px;font-size:7.8px;font-weight:400;color:#f4f4f4;transform:scaleX(0.8168);">Any CPU</span>
<span class="t" style="left:302.60px;top:66px;font-size:7.8px;font-weight:400;color:#f4f4f4;transform:scaleX(0.8697);">SampleVirtualAssistant</span>
<span class="t" style="left:432.80px;top:66px;font-size:7.8px;font-weight:400;color:#f4f4f4;transform:scaleX(0.7950);">IIS Express</span>
<span class="t" style="left:925.00px;top:67px;font-size:7.8px;font-weight:400;color:#f0f0f0;transform:scaleX(0.8530);">Live Share</span>
<span class="t" style="left:814.60px;top:88px;font-size:7.8px;font-weight:400;color:#ffffff;transform:scaleX(0.8823);">Solution Explorer</span>
<span class="t" style="left:814.80px;top:117px;font-size:7.8px;font-weight:400;color:#8c8c8c;transform:scaleX(0.8811);">Search Solution Explorer (Ctrl+è)</span>
<span class="t" style="left:831.30px;top:130px;font-size:7.8px;font-weight:400;color:#f0f0f0;transform:scaleX(0.8940);">Solution 'SampleVirtualAssistant' (4 of 4 projects)</span>
<span class="t" style="left:841.80px;top:141px;font-size:7.8px;font-weight:400;color:#eeeeee;transform:scaleX(0.8641);">SampleSkill</span>
<span class="t" style="left:841.80px;top:151px;font-size:7.8px;font-weight:400;color:#eeeeee;transform:scaleX(0.8428);">SampleSkill.Tests</span>
<span class="t" style="left:841.80px;top:162px;font-size:7.8px;font-weight:700;color:#ffffff;transform:scaleX(0.8785);">SampleVirtualAssistant</span>
<span class="t" style="left:841.80px;top:172px;font-size:7.8px;font-weight:400;color:#eeeeee;transform:scaleX(0.8585);">SampleVirtualAssistant.Tests</span>
<span class="t" style="left:814.90px;top:562px;font-size:7.8px;font-weight:400;color:#dcdcdc;transform:scaleX(0.8535);">Find and R...</span>
<span class="t" style="left:861.00px;top:562px;font-size:7.8px;font-weight:400;color:#dcdcdc;transform:scaleX(0.8636);">Properties</span>
<span class="t" style="left:899.10px;top:562px;font-size:7.8px;font-weight:400;color:#0e8ae0;transform:scaleX(0.8705);">Solution E...</span>
<span class="t" style="left:945.30px;top:562px;font-size:7.8px;font-weight:400;color:#dcdcdc;transform:scaleX(0.8414);">Team Expl...</span>
<span class="t" style="left:36.20px;top:577px;font-size:7.8px;font-weight:400;color:#dcdcdc;transform:scaleX(0.8992);">Web Publish Activity</span>
<span class="t" style="left:106.00px;top:577px;font-size:7.8px;font-weight:400;color:#dcdcdc;transform:scaleX(0.9399);">Output</span>
<span class="t" style="left:135.00px;top:577px;font-size:7.8px;font-weight:400;color:#dcdcdc;transform:scaleX(0.8533);">Error List</span>
<span class="t" style="left:48.90px;top:594px;font-size:7.8px;font-weight:400;color:#ffffff;transform:scaleX(0.8094);">Ready</span>
<span class="t" style="left:880.20px;top:594px;font-size:7.8px;font-weight:400;color:#ffffff;transform:scaleX(0.8968);">Add to Source Control</span>
<span class="t" style="left:975.90px;top:595px;font-size:5.6px;font-weight:400;color:#ffffff;transform:scaleX(1.0240);">3</span>
<span class="t" style="left:133.00px;top:609px;font-size:7.8px;font-weight:400;color:#ffffff;transform:scaleX(0.8545);">SampleVirtualAssistan...</span>
<span class="t" style="left:333.80px;top:609px;font-size:7.8px;font-weight:400;color:#ffffff;transform:scaleX(0.8531);">PowerShell 6 (x64)</span>
<span class="t" style="left:530.40px;top:609px;font-size:4.8px;font-weight:700;color:#ffffff;transform:scaleX(1.0378);">R</span>
<span class="t" style="left:556.90px;top:609px;font-size:7.8px;font-weight:400;color:#ffffff;transform:scaleX(0.9184);">*new 1 - Notepad++</span>
<span class="t" style="left:930.00px;top:609px;font-size:6.8px;font-weight:400;color:#ffffff;transform:scaleX(0.9640);">3:03 PM</span>
</body></html>
